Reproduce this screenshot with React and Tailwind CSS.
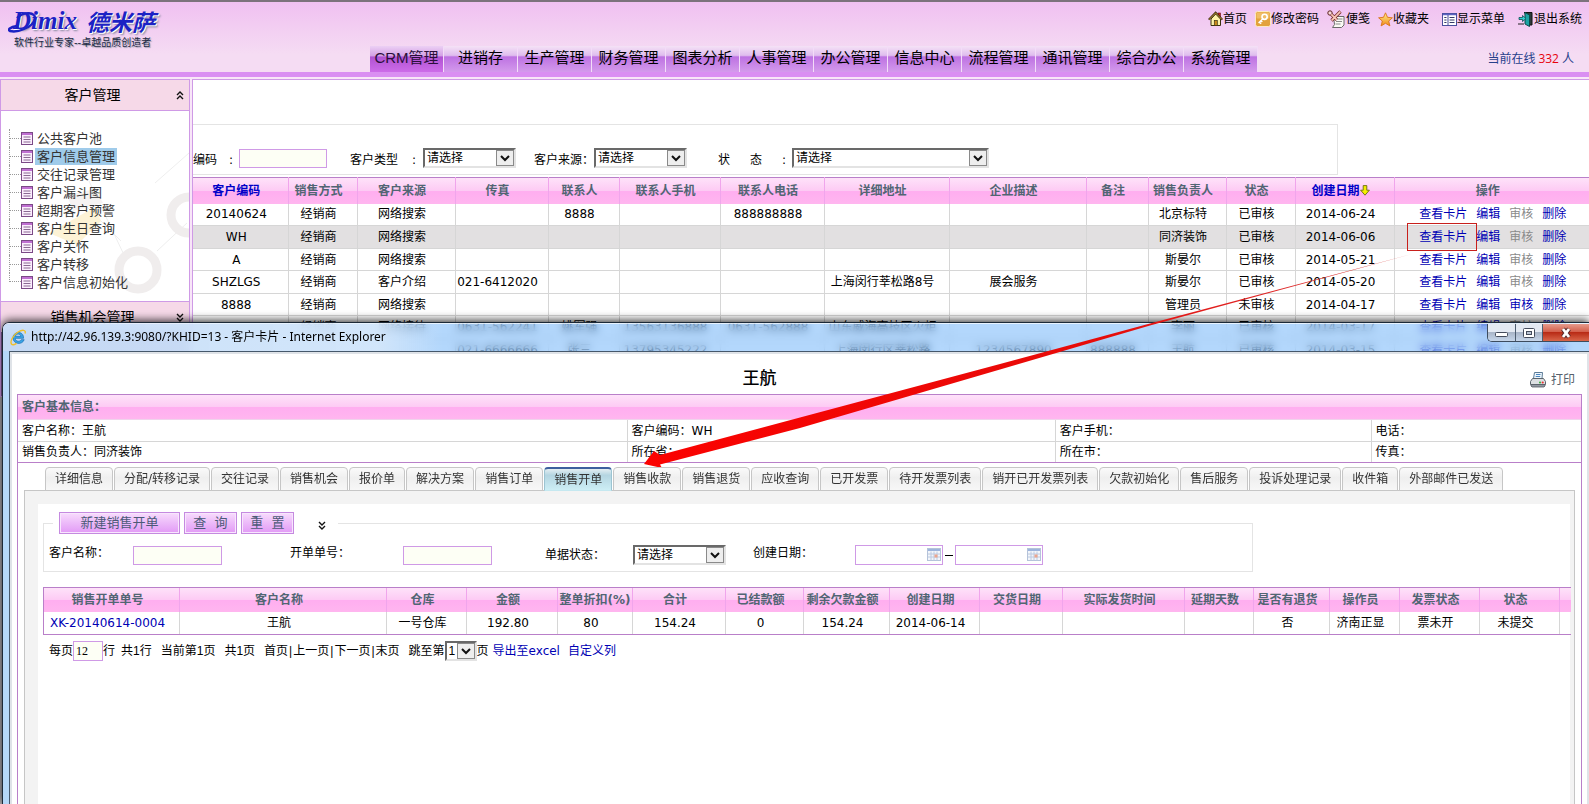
import React from 'react';

const FONT = "font-['DejaVu_Sans','Noto_Sans_CJK_SC',sans-serif]";
const ARIAL = "font-['Liberation_Sans','Noto_Sans_CJK_SC',sans-serif]";
const PINK = 'bg-[linear-gradient(to_bottom,#fee2f9_0%,#fdcbf4_48%,#ffaef0_52%,#ffb6ef_100%)]';
const INPUT = 'h-[19px] border border-[#cf9ae6] bg-[#fdfff5] px-1 outline-none';

/* ---------- icons ---------- */
const HomeIcon = () => (
  <svg width="15" height="16" viewBox="0 0 15 16">
    <rect x="10" y="2" width="2.5" height="5" fill="#c22" stroke="#611" strokeWidth=".6" />
    <path d="M3 8v6.5h9.5V8L7.7 3z" fill="#fdf3a8" stroke="#3a3210" />
    <path d="M.7 8.6 7.6 1.6l6.8 7" fill="none" stroke="#3a2a10" strokeWidth="1.8" />
    <path d="M1.2 8.3 7.6 2l6.2 6.3" fill="none" stroke="#f2c53d" strokeWidth=".7" />
    <rect x="6.3" y="9.5" width="3" height="5" fill="#c98a1c" stroke="#3a3210" strokeWidth=".7" />
  </svg>
);
const KeyIcon = () => (
  <svg width="16" height="16" viewBox="0 0 16 16">
    <rect x=".5" y=".5" width="15" height="15" rx="2" fill="#e3a23c" stroke="#fbe9c5" />
    <rect x="1.5" y="1.5" width="13" height="6" rx="1" fill="#f0bd66" />
    <circle cx="9.6" cy="5.8" r="2.6" fill="none" stroke="#fff" strokeWidth="1.6" />
    <path d="M7.8 7.8 3.6 12M4.4 11l1.7 1.7M6 9.6l1.3 1.3" stroke="#fff" strokeWidth="1.5" fill="none" />
  </svg>
);
const NoteIcon = () => (
  <svg width="19" height="18" viewBox="0 0 19 18">
    <path d="M6.500 6.500h10.500v8.500l-2.500 2.500h-9l2-3z" fill="#fafaf4" stroke="#6b6b6b" />
    <path d="M9.500 9h6M9 11.500h6M8.500 14h5" stroke="#8a8a8a" />
    <circle cx="3" cy="3" r="2.200" fill="#f7d9d9" stroke="#5a2020" />
    <path d="m4.300 4.300 5.500 5.500M13.500 1.500 4.500 10.500" stroke="#7a2e2e" strokeWidth="3.200" />
    <path d="m4.300 4.300 5.500 5.500M13.300 1.700 4.700 10.300" stroke="#f7c7b5" strokeWidth="1.800" />
  </svg>
);
const StarIcon = () => (
  <svg width="15" height="15" viewBox="0 0 15 15">
    <defs>
      <linearGradient id="star" x1="0" y1="0" x2="0" y2="1">
        <stop offset="0" stopColor="#fff08a" />
        <stop offset="1" stopColor="#f08a1c" />
      </linearGradient>
    </defs>
    <path d="m7.500.8 2 4.500 4.900.5-3.700 3.200 1.200 4.900-4.400-2.600-4.400 2.600 1.200-4.900L.6 5.800l4.900-.5z" fill="url(#star)" stroke="#d9731a" strokeWidth=".9" />
  </svg>
);
const MenuIcon = () => (
  <svg width="15" height="13" viewBox="0 0 15 13">
    <rect x=".5" y=".5" width="14" height="12" fill="#fff" stroke="#4a4f9c" />
    <path d="M1 1.500h13" stroke="#5b63c0" strokeWidth="1.500" />
    <path d="M6 2v10.500" stroke="#4a4f9c" />
    <path d="M2.300 4.500h2.200M2.300 7h2.200M2.300 9.500h2.200M7.500 4.500h5M7.500 7h5M7.500 9.500h5" stroke="#333a66" />
  </svg>
);
const ExitIcon = () => (
  <svg width="16" height="16" viewBox="0 0 16 16">
    <path d="M6 1.500h8V14h-3" fill="#2d3a3a" stroke="#111" />
    <path d="M7 1.500 11.500 4v11.500L7 13z" fill="#1aa3a3" stroke="#0a4a4a" />
    <path d="M1 6.500h3.500v-2L8 7.500l-3.500 3v-2H1z" fill="#2fd0d0" stroke="#0c4c50" strokeWidth=".8" />
    <path d="M0 13h6" stroke="#222" />
  </svg>
);
const DocIcon = () => (
  <svg width="12" height="13" viewBox="0 0 12 13" className="shrink-0">
    <rect x=".5" y=".5" width="11" height="12" fill="#fbeefd" stroke="#7b4a86" />
    <path d="M1 2h10" stroke="#c06fd2" strokeWidth="2" />
    <path d="M2.500 5h7M2.500 7.500h7M2.500 10h7" stroke="#8a6a92" />
  </svg>
);
const Chevrons = ({ up }) => (
  <svg width="8" height="9" viewBox="0 0 8 9">
    <path d={up ? 'M1 4l3-3 3 3M1 8l3-3 3 3' : 'M1 1l3 3 3-3M1 5l3 3 3-3'} fill="none" stroke="#111" strokeWidth="1.400" />
  </svg>
);
const SortArrow = () => (
  <svg width="10" height="11" viewBox="0 0 10 11">
    <path d="M3.200.6h3.600v4.600h2.600L5 10.200.6 5.200h2.600z" fill="#f4f000" stroke="#6b6b10" strokeWidth=".9" />
  </svg>
);
const IeIcon = () => (
  <svg width="17" height="17" viewBox="0 0 17 17">
    <path d="M13.600 9.300H5.200c.1 3.200 4.600 4 6 1.400h3C12.300 16.300 3 15.400 3 8.700 3 2.300 13.800 1 13.600 9.300zM5.400 7.300h5.400C10.400 4.300 5.900 4.400 5.400 7.300z" fill="#3aa5e6" stroke="#1a6fb5" strokeWidth=".7" />
    <path d="M15 4.500C16.500.5 12 .6 8 3 3 6.200-.2 12.500 1.500 15c1 1.400 3.500.4 5-.6" fill="none" stroke="#efc02c" strokeWidth="1.400" />
  </svg>
);
const PrinterIcon = () => (
  <svg width="16" height="16" viewBox="0 0 16 16">
    <path d="M4.500.5h8l-.5 6H3.500z" fill="#eef6fc" stroke="#5c7b96" />
    <path d="M6 2.500h4.500M5.700 4.500h4.500" stroke="#4a86c0" />
    <path d="M2.500 6.500h11l2 3v3h-15v-3z" fill="#dcdfe2" stroke="#5b646c" />
    <path d="M1 12.500h14v1.500l-1 1H2l-1-1z" fill="#9097a0" stroke="#555c66" strokeWidth=".8" />
    <circle cx="10" cy="10.500" r="1" fill="#3a3" />
    <circle cx="12.700" cy="10.500" r="1.100" fill="#e33" />
  </svg>
);
const CalendarIcon = () => (
  <svg width="14" height="13" viewBox="0 0 14 13">
    <rect x=".5" y=".5" width="13" height="12" fill="#f3f6fb" stroke="#b5c3da" />
    <path d="M1 2h12" stroke="#9db4dc" strokeWidth="2" />
    <path d="M1 6h12M1 9h12M4 3.500v9M7 3.500v9M10 3.500v9" stroke="#bccae0" />
    <rect x="7.500" y="6.500" width="3" height="3" fill="#eda58e" />
  </svg>
);

/* ---------- small controls ---------- */
function Select({ id, label, value, className }) {
  return (
    <span className={`relative inline-block h-5 ${className}`}>
      <select
        id={id}
        aria-label={label}
        className="block h-5 w-full appearance-none border-2 border-t-[#696969] border-l-[#696969] border-r-[#e3e3e3] border-b-[#e3e3e3] bg-white pl-[2px] text-xs leading-4 text-black outline-none"
      >
        <option>{value}</option>
      </select>
      <span className="pointer-events-none absolute top-[2px] right-[2px] flex h-4 w-[18px] items-center justify-center border border-[#8a8a8a] bg-[#eee]">
        <svg width="10" height="7" viewBox="0 0 10 7">
          <path d="m1 1 4 4 4-4" fill="none" stroke="#111" strokeWidth="2" />
        </svg>
      </span>
    </span>
  );
}

function DateBox({ label }) {
  return (
    <span className="relative inline-block h-5 w-[88px]">
      <input aria-label={label} className="h-5 w-full border border-[#cf9ae6] bg-white pr-5 pl-1 outline-none" />
      <span className="pointer-events-none absolute top-[3px] right-[2px]">
        <CalendarIcon />
      </span>
    </span>
  );
}

/* ---------- header ---------- */
const NAV = ['CRM管理', '进销存', '生产管理', '财务管理', '图表分析', '人事管理', '办公管理', '信息中心', '流程管理', '通讯管理', '综合办公', '系统管理'];

function Logo() {
  return (
    <a href="#logo" className="row-span-2 block pt-1 pl-2 text-[#1c22c4]">
      <span className="relative flex h-[30px] items-center gap-[7px] [text-shadow:1px_1px_0_#fff,2px_2px_2px_#8a8aa0]">
        <span className="w-[71px] pl-[5px] font-['Liberation_Serif',serif] text-[25px] leading-[30px] font-bold italic">Dimix</span>
        <span className="font-['Noto_Sans_CJK_SC',sans-serif] text-[23px] leading-[30px] font-bold italic">德米萨</span>
        <svg className="absolute top-[4px] left-0" width="34" height="24" viewBox="0 0 34 24">
          <path d="M9 16C2 17-1 20 2 21c8 2 23-4 25-12C28 2 16 1 9 8" fill="none" stroke="#1c22c4" strokeWidth="2.400" />
        </svg>
      </span>
      <span className="block pl-[6px] text-[10px] leading-[14px] text-[#222a44] [text-shadow:1px_1px_1px_#9a9aaa]">软件行业专家--卓越品质创造者</span>
    </a>
  );
}

function TopLink({ icon, children }) {
  return (
    <a href="#top" className="flex items-center text-black">
      {icon}
      {children}
    </a>
  );
}

function Header() {
  return (
    <header className="border-t-2 border-[#7c727c] bg-[#f8e6f8] pb-[2px]">
      <div className="grid grid-cols-[370px_auto_1fr] grid-rows-[34px_36px] bg-[linear-gradient(to_bottom,#f0c0f1,#f5dcf3_75%)]">
        <Logo />
        <div className="col-span-2 flex items-center justify-end gap-[13px] pr-[7px]">
          <div className="flex items-center gap-2">
            <TopLink icon={<HomeIcon />}>首页</TopLink>
            <TopLink icon={<KeyIcon />}>修改密码</TopLink>
            <TopLink icon={<NoteIcon />}>便笺</TopLink>
            <TopLink icon={<StarIcon />}>收藏夹</TopLink>
          </div>
          <TopLink icon={<MenuIcon />}>显示菜单</TopLink>
          <TopLink icon={<ExitIcon />}>退出系统</TopLink>
        </div>
        <nav className={`flex items-end text-[15px] ${ARIAL}`}>
          {NAV.map((n, i) => (
            <a
              key={n}
              href="#nav"
              className={`flex h-[26px] w-[74px] items-center justify-center border-r border-[#f3dcf8] pb-[2px] whitespace-nowrap ${
                i === 0
                  ? 'bg-[linear-gradient(to_bottom,#ecd0f4_0%,#d3a0e6_38%,#b052d2_42%,#cd6ce9_100%)] text-[#2a0e3a]'
                  : 'bg-[linear-gradient(to_bottom,#f5e2f6_0%,#dfbdee_36%,#bd72e2_42%,#d49aec_100%)] text-black'
              }`}
            >
              {n}
            </a>
          ))}
        </nav>
        <div className="flex h-[26px] items-center gap-[3px] self-end justify-self-end pr-[15px] whitespace-nowrap text-[#27408b]">
          当前在线 <span className="font-['Open_Sans',sans-serif] text-red-600">332</span> 人
        </div>
      </div>
      <div className="h-[5px] bg-[#da8ff2]" />
    </header>
  );
}

/* ---------- sidebar ---------- */
const TREE = ['公共客户池', '客户信息管理', '交往记录管理', '客户漏斗图', '超期客户预警', '客户生日查询', '客户关怀', '客户转移', '客户信息初始化'];

function SideHead({ up, children }) {
  return (
    <button type="button" className="flex h-[30px] w-full items-center justify-between bg-[#f6d9e8] pr-[5px] pl-2 text-sm text-black">
      <span className="flex-1 text-center">{children}</span>
      <Chevrons up={up} />
    </button>
  );
}

function Sidebar() {
  return (
    <aside className="w-[190px] shrink-0 border border-[#cf9ae6] bg-white">
      <SideHead up>客户管理</SideHead>
      <div className="relative h-[192px] overflow-hidden border-y border-[#cf9ae6] pt-[18px] pl-2">
        <svg className="absolute inset-0" width="188" height="190" viewBox="0 0 188 190">
          <path d="m88 70 36 76M86 96l34 34M154 72l34-30M156 140l30-28" stroke="#eee" />
          <circle cx="137" cy="159" r="19" fill="none" stroke="#f0eded" strokeWidth="9" />
          <circle cx="188" cy="104" r="18" fill="none" stroke="#f0eded" strokeWidth="9" />
          <path d="m48 122 46-26 6 14-24 24z" fill="#fdf3d6" />
          <path d="m66 84 28-6 8 14-30 8z" fill="#f5f2f2" />
        </svg>
        <ul className="relative text-[13px] text-[#333]">
          {TREE.map((t, i) => (
            <li key={t} className="flex h-[18px] items-center">
              <span className={`relative w-[12px] border-l border-dotted border-[#999] ${i === TREE.length - 1 ? 'h-[9px] self-start' : 'h-full'}`}>
                <span className={`absolute left-0 w-[11px] border-t border-dotted border-[#999] ${i === TREE.length - 1 ? 'bottom-0' : 'top-[9px]'}`} />
              </span>
              <DocIcon />
              <a href="#tree" className={`ml-[2px] px-[2px] leading-[17px] ${i === 1 ? 'bg-[#9fcbea]' : ''}`}>
                {t}
              </a>
            </li>
          ))}
        </ul>
      </div>
      <SideHead>销售机会管理</SideHead>
      <div className="h-16 bg-[#80609a]" />
    </aside>
  );
}

/* ---------- customer list ---------- */
const COLS = ['w-[95px]', 'w-[69px]', 'w-[98px]', 'w-[93px]', 'w-[71px]', 'w-[101px]', 'w-[104px]', 'w-[125px]', 'w-[137px]', 'w-[62px]', 'w-[78px]', 'w-[69px]', 'w-[99px]', 'w-[195px]'];
const HEADS = ['客户编码', '销售方式', '客户来源', '传真', '联系人', '联系人手机', '联系人电话', '详细地址', '企业描述', '备注', '销售负责人', '状态', '创建日期', '操作'];
const ROWS = [
  ['20140624', '经销商', '网络搜索', '', '8888', '', '888888888', '', '', '', '北京标特', '已审核', '2014-06-24'],
  ['WH', '经销商', '网络搜索', '', '', '', '', '', '', '', '同济装饰', '已审核', '2014-06-06'],
  ['A', '经销商', '网络搜索', '', '', '', '', '', '', '', '斯晏尔', '已审核', '2014-05-21'],
  ['SHZLGS', '经销商', '客户介绍', '021-6412020', '', '', '', '上海闵行莘松路8号', '展会服务', '', '斯晏尔', '已审核', '2014-05-20'],
  ['8888', '经销商', '网络搜索', '', '', '', '', '', '', '', '管理员', '未审核', '2014-04-17'],
  ['', '经销商', '网络接待', '0631-562241', '姚军强', '13563136888', '0631-562888', '山东威海高技区火炬', '', '', '李丽', '已审核', '2014-03-17'],
  ['', '', '', '021-6666666', '张三', '13795345222', '', '上海闵行区莘松路', '1234567890', '888888', '王航', '已审核', '2014-03-15'],
];

function CustomerList() {
  return (
    <main className="min-w-0 flex-1 border-t border-l border-[#cf9ae6] bg-white">
      <form className="mt-11 flex h-[51px] max-w-[1145px] items-end border border-l-0 border-[#e4e4e4] pb-[6px]">
        <div className="grid grid-cols-[46px_111px_73px_111px_60px_124px_74px_197px] items-end leading-4">
          <label htmlFor="code" className="flex w-[40px] justify-between">编码<span>:</span></label>
          <input id="code" className={`${INPUT} w-[88px]`} />
          <label htmlFor="ctype" className="flex w-[66px] justify-between">客户类型<span>:</span></label>
          <Select id="ctype" value="请选择" className="w-[93px]" />
          <label htmlFor="csource">客户来源：</label>
          <Select id="csource" value="请选择" className="w-[93px]" />
          <label htmlFor="cstate" className="flex w-[68px] justify-between"><span>状</span><span>态</span><span>:</span></label>
          <Select id="cstate" value="请选择" className="w-full" />
        </div>
      </form>
      <div className="mt-[2px] overflow-hidden">
        <table className="w-full table-fixed border-collapse border-t border-[#b97fc9] text-center whitespace-nowrap">
          <thead>
            <tr className={`h-[26px] ${PINK} text-[#516573]`}>
              {HEADS.map((h, i) => (
                <th key={h} className={`${COLS[i]} border-r border-[#f0a5ec] p-0 pr-2 last:border-r-0`}>
                  {i === 0 || i === 12 ? (
                    <a href="#sort" className="inline-flex items-center text-[#0000c8]">
                      {h}
                      {i === 12 && <SortArrow />}
                    </a>
                  ) : (
                    h
                  )}
                </th>
              ))}
            </tr>
          </thead>
          <tbody>
            {ROWS.map((r, i) => (
              <tr key={i} className={`${i % 2 ? 'h-[23px]' : 'h-[22px]'} ${i === 1 ? 'bg-[#e2e0e1]' : ''}`}>
                {r.map((c, j) => (
                  <td key={j} className="overflow-hidden border-r border-b border-[#d6d6d6] p-0 pr-2 leading-4">
                    {c}
                  </td>
                ))}
                <td className="border-b border-[#d6d6d6] p-0 pl-[2px] leading-4">
                  <span className="inline-flex gap-[9px] text-[#0000b4]">
                    <span className="relative">
                      <a href="#card">查看卡片</a>
                      {i === 1 && <span className="absolute -top-[6px] -right-[10px] -bottom-[6px] -left-3 border border-[#c8201c]" />}
                    </span>
                    <a href="#edit">编辑</a>
                    {i === 4 ? <a href="#audit">审核</a> : <span className="text-[#8a8a8a]">审核</span>}
                    <a href="#delete">删除</a>
                  </span>
                </td>
              </tr>
            ))}
          </tbody>
        </table>
      </div>
    </main>
  );
}

/* ---------- customer card window ---------- */
const TABS = ['详细信息', '分配/转移记录', '交往记录', '销售机会', '报价单', '解决方案', '销售订单', '销售开单', '销售收款', '销售退货', '应收查询', '已开发票', '待开发票列表', '销开已开发票列表', '欠款初始化', '售后服务', '投诉处理记录', '收件箱', '外部邮件已发送'];

const BILL_COLS = [
  ['w-[136px]', '销售开单单号', 'XK-20140614-0004'],
  ['w-[207px]', '客户名称', '王航'],
  ['w-[80px]', '仓库', '一号仓库'],
  ['w-[91px]', '金额', '192.80'],
  ['w-[75px]', '整单折扣(%)', '80'],
  ['w-[93px]', '合计', '154.24'],
  ['w-[78px]', '已结款额', '0'],
  ['w-[86px]', '剩余欠款金额', '154.24'],
  ['w-[90px]', '创建日期', '2014-06-14'],
  ['w-[83px]', '交货日期', ''],
  ['w-[122px]', '实际发货时间', ''],
  ['w-[69px]', '延期天数', ''],
  ['w-[76px]', '是否有退货', '否'],
  ['w-[70px]', '操作员', '济南正显'],
  ['w-[80px]', '发票状态', '票未开'],
  ['w-[80px]', '状态', '未提交'],
  ['w-[11px]', '', ''],
];

function TitleBar() {
  return (
    <div className="relative h-[28px] overflow-hidden rounded-tl-[6px] border-t border-white/70 bg-[#74b6fa]/55 backdrop-blur-xs">
      <div className="absolute inset-y-0 left-0 w-[440px] bg-[linear-gradient(to_right,rgba(205,225,248,.9),rgba(215,232,250,.85)_85%,transparent)]" />
      <div className="relative flex items-start justify-between">
        <div className="flex h-[26px] items-center gap-1 pl-[7px] font-['Noto_Sans','Noto_Sans_CJK_SC',sans-serif] text-xs text-black">
          <IeIcon />
          http://42.96.139.3:9080/?KHID=13 - 客户卡片 - Internet Explorer
        </div>
        <div className="flex h-[18px] overflow-hidden rounded-bl-[5px] border border-t-0 border-r-0 border-[#3d4c5e]">
          <button type="button" aria-label="最小化" className="flex w-[28px] items-center justify-center border-r border-[#4d5d70] bg-[linear-gradient(to_bottom,#e3e9f2_45%,#a9b6c9_50%,#c6d6ea)]">
            <svg width="13" height="5" viewBox="0 0 13 5" className="mt-1"><rect x=".5" y=".5" width="12" height="4" rx="1" fill="#fff" stroke="#444c5c" /></svg>
          </button>
          <button type="button" aria-label="还原" className="flex w-[27px] items-center justify-center border-r border-[#4d5d70] bg-[linear-gradient(to_bottom,#e3e9f2_45%,#a9b6c9_50%,#c6d6ea)]">
            <svg width="12" height="10" viewBox="0 0 12 10"><rect x=".5" y=".5" width="11" height="9" rx="1" fill="#fff" stroke="#444c5c" /><rect x="3.500" y="3.500" width="5" height="3" fill="#b9c4d4" stroke="#444c5c" /></svg>
          </button>
          <button type="button" aria-label="关闭" className="flex w-[46px] items-center justify-center bg-[linear-gradient(to_bottom,#e79b8c_0%,#d3604c_45%,#b92b16_50%,#d8664a)]">
            <svg width="14" height="12" viewBox="0 0 14 12"><path d="m4 2 6 8M10 2l-6 8" stroke="#5a2a2a" strokeWidth="4.600" /><path d="m4 2 6 8M10 2l-6 8" stroke="#fff" strokeWidth="2.800" /></svg>
          </button>
        </div>
      </div>
    </div>
  );
}

function InfoTable() {
  const cell = 'border-r border-b border-[#d6d6d6] p-0 pl-1 last:border-r-0';
  return (
    <table className="w-full table-fixed border-separate border-spacing-0 border-y border-[#b97fc9] text-left whitespace-nowrap">
      <colgroup>
        <col className="w-[39%]" />
        <col className="w-[27.4%]" />
        <col className="w-[20.2%]" />
        <col />
      </colgroup>
      <thead>
        <tr>
          <th colSpan={4} className={`h-[25px] ${PINK} border-b border-[#f0d4ec] p-0 pl-1 text-[#516573]`}>客户基本信息：</th>
        </tr>
      </thead>
      <tbody className="[&>tr:last-child>td]:border-b-0">
        <tr className="h-[22px]">
          <td className={cell}>客户名称：王航</td>
          <td className={cell}>客户编码：WH</td>
          <td className={cell}>客户手机：</td>
          <td className={cell}>电话：</td>
        </tr>
        <tr className="h-[20px]">
          <td className={cell}>销售负责人：同济装饰</td>
          <td className={cell}>所在省：</td>
          <td className={cell}>所在市：</td>
          <td className={cell}>传真：</td>
        </tr>
      </tbody>
    </table>
  );
}

function Tabs() {
  return (
    <div role="tablist" className="relative z-10 flex gap-px pt-1 pl-[27px]">
      {TABS.map((t, i) => (
        <button
          key={t}
          type="button"
          role="tab"
          aria-selected={i === 7}
          className={`h-6 rounded-t-[4px] border px-[9px] whitespace-nowrap text-[#333] ${
            i === 7
              ? 'border-[#9cc4d2] border-t-2 border-t-[#3d5f9e] border-b-[#c5e8f0] bg-[linear-gradient(to_bottom,#e4eef2_0%,#b4d5e1_30%,#cdeef5_100%)]'
              : 'border-[#c6c6c6] bg-[linear-gradient(to_bottom,#fafafa,#efefef_45%,#f7f7f7)]'
          }`}
        >
          {t}
        </button>
      ))}
    </div>
  );
}

function PinkButton({ className, children }) {
  return (
    <button type="button" className={`h-[22px] border border-[#c58ae0] bg-[linear-gradient(to_bottom,#f8dcfd,#ecbaf9_50%,#e29af6)] text-[13px] leading-4 text-[#4c5a78] shadow-[inset_0_0_0_1px_#f8e6fd] ${className}`}>
      {children}
    </button>
  );
}

function BillSearch() {
  return (
    <fieldset className="max-w-[1210px] border border-[#e4e4e4] pb-[6px] pl-[5px]">
      <legend className="ml-1 flex items-center gap-1 px-[6px]">
        <PinkButton className="w-[121px]">新建销售开单</PinkButton>
        <PinkButton className="w-[53px]">查&nbsp; 询</PinkButton>
        <PinkButton className="w-[53px]">重&nbsp; 置</PinkButton>
        <button type="button" aria-label="展开" className="mr-[6px] ml-5 pt-1">
          <Chevrons />
        </button>
      </legend>
      <div className="mt-[11px] grid grid-cols-[84px_157px_113px_142px_88px_120px_102px_1fr] items-center leading-4">
        <label htmlFor="bname" className="self-start">客户名称：</label>
        <input id="bname" className={`${INPUT} w-[89px]`} />
        <label htmlFor="bno" className="self-start">开单单号：</label>
        <input id="bno" className={`${INPUT} w-[89px]`} />
        <label htmlFor="bstate">单据状态：</label>
        <Select id="bstate" value="请选择" className="w-[93px]" />
        <span className="self-start">创建日期：</span>
        <span className="flex items-center gap-[2px]">
          <DateBox label="创建日期起" />
          <span className="h-px w-2 bg-black" />
          <DateBox label="创建日期止" />
        </span>
      </div>
    </fieldset>
  );
}

function BillTable() {
  return (
    <table className="mt-[15px] w-full table-fixed border-separate border-spacing-0 border-y border-l border-[#b97fc9] text-center whitespace-nowrap">
      <thead>
        <tr className={`${PINK} text-[#516573]`}>
          {BILL_COLS.map(([w, h], i) => (
            <th key={i} className={`${w} h-6 overflow-hidden border-r border-[#f0a5ec] p-0 last:border-r-0 ${i === 4 ? '' : 'pr-2 last:pr-0'}`}>{h}</th>
          ))}
        </tr>
      </thead>
      <tbody>
        <tr>
          {BILL_COLS.map(([, , v], i) => (
            <td key={i} className="h-[22px] overflow-hidden border-r border-[#d6d6d6] p-0 pr-2 leading-4 last:border-r-0 last:pr-0">
              {i === 0 ? <a href="#bill" className="text-[#0000b4]">{v}</a> : v}
            </td>
          ))}
        </tr>
      </tbody>
    </table>
  );
}

const Bar = () => <span className="px-px">|</span>;

function Pager() {
  return (
    <div className={`mt-[6px] flex items-center pl-[6px] whitespace-nowrap ${ARIAL}`}>
      <label htmlFor="psize">每页</label>
      <input id="psize" defaultValue="12" className="h-5 w-[30px] border border-[#cf9ae6] bg-[#fdfff5] px-[2px] font-['Liberation_Serif',serif] text-xs outline-none" />
      <span>行</span>
      <span className="ml-[6px]">共1行</span>
      <span className="ml-[9px]">当前第1页</span>
      <span className="ml-[9px]">共1页</span>
      <span className="ml-[9px]">
        <a href="#first">首页</a>
        <Bar />
        <a href="#prev">上一页</a>
        <Bar />
        <a href="#next">下一页</a>
        <Bar />
        <a href="#last">末页</a>
      </span>
      <span className="ml-[9px]">跳至第</span>
      <Select label="页码" value="1" className="w-8" />
      <span>页</span>
      <span className={`flex gap-2 pl-1 text-[#0000b4] ${FONT}`}>
        <a href="#export">导出至excel</a>
        <a href="#columns">自定义列</a>
      </span>
    </div>
  );
}

function CardWindow() {
  return (
    <section className="absolute top-[322px] right-0 bottom-0 left-[2px] flex flex-col rounded-tl-[7px] border-t border-l border-[#1c2a38] shadow-[0_-2px_8px_rgba(0,0,0,.75)]">
      <TitleBar />
      <div className="flex flex-1 bg-[#b5d8f8] pl-[6px]">
        <div className="flex min-w-0 flex-1 flex-col border-t border-l border-[#46586b] bg-[#dfe3e8] pt-[2px] pr-[2px] pl-[2px]">
          <div className="flex flex-1 flex-col bg-white px-[5px]">
            <div className="flex h-10 items-center pt-2">
              <h1 className="flex-1 text-center text-[17px] leading-6 font-medium text-black">王航</h1>
              <a href="#print" className="flex w-20 items-center justify-end gap-[5px] pt-1 pr-[7px] text-[#56606b]">
                <PrinterIcon />
                打印
              </a>
            </div>
            <div className="flex flex-1 flex-col border-x border-[#b97fc9]">
              <InfoTable />
              <Tabs />
              <div className="-mt-px mr-[6px] ml-[6px] flex flex-1 flex-col border-x border-t border-[#c6c6c6] bg-[#f3f3f3] pt-[13px] pr-1 pl-[13px]">
                <div className="flex-1 bg-white pt-2 pl-[5px]">
                  <BillSearch />
                  <BillTable />
                  <Pager />
                </div>
              </div>
            </div>
          </div>
        </div>
      </div>
    </section>
  );
}

export default function App() {
  return (
    <div className={`relative min-h-screen overflow-hidden bg-[#a9a6ab] text-xs text-black ${FONT}`}>
      <Header />
      <div className="flex items-start gap-[2px] bg-[#f8e6f8]">
        <Sidebar />
        <CustomerList />
      </div>
      <CardWindow />
      <svg className="pointer-events-none absolute top-[250px] left-[640px]" width="780" height="222" viewBox="640 250 780 222">
        <defs>
          <linearGradient id="arrow" x1="0" y1="0" x2="1" y2="0">
            <stop offset="0" stopColor="#fb0200" />
            <stop offset=".6" stopColor="#e60c0a" />
            <stop offset="1" stopColor="#d84040" />
          </linearGradient>
        </defs>
        <path d="M644 464 654 451 660 455 800 417.500 1000 364 1150 323.500 1412 254 1150 325.500 1000 369.500 800 428 660 464.500 662 468z" fill="url(#arrow)" />
      </svg>
    </div>
  );
}
